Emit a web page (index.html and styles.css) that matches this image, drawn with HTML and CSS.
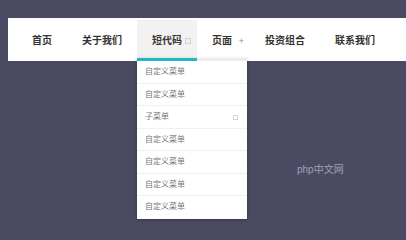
FILE: index.html
```html
<!DOCTYPE html>
<html>
<head>
    <meta charset="UTF-8">
    <title>导航菜单</title>
    <link rel="stylesheet" href="styles.css">
</head>
<body>
    <ul class="navBar">
        <li class="navItem"><a href="#">首页</a></li>
        <li class="navItem"><a href="#">关于我们</a></li>
        <li class="navItem navActive">
            <a href="#">短代码</a><span class="boxIcon"></span>
            <ul class="subMenu">
                <li><a href="#">自定义菜单</a></li>
                <li><a href="#">自定义菜单</a></li>
                <li><a href="#">子菜单</a><span class="boxIcon subBox"></span></li>
                <li><a href="#">自定义菜单</a></li>
                <li><a href="#">自定义菜单</a></li>
                <li><a href="#">自定义菜单</a></li>
                <li><a href="#">自定义菜单</a></li>
            </ul>
        </li>
        <li class="navItem navPlus"><a href="#">页面</a><span class="plusIcon">+</span></li>
        <li class="navItem"><a href="#">投资组合</a></li>
        <li class="navItem"><a href="#">联系我们</a></li>
    </ul>
    <p class="siteMark">php中文网</p>
</body>
</html>
```

FILE: styles.css
```css
html, body {
    margin: 0;
    padding: 0;
}

body {
    background: #4a4a62;
    padding: 18px 0 0 8px;
    height: 240px;
    box-sizing: border-box;
    overflow: hidden;
    font-family: "Liberation Sans", "Noto Sans CJK SC", sans-serif;
}

ul {
    list-style: none;
    margin: 0;
    padding: 0;
}

a {
    text-decoration: none;
}

.navBar {
    display: flex;
    background: #fff;
    height: 43px;
    padding: 2px 0 0 9px;
    box-sizing: border-box;
    width: 100%;
}

.navItem {
    position: relative;
    flex-shrink: 0;
    height: 41px;
    padding: 0 15px;
    box-sizing: border-box;
    line-height: 42px;
    font-size: 10px;
    font-weight: bold;
}

.navItem a {
    color: #333;
}

.navActive {
    background: #f2f2f2;
}

.navActive::after {
    content: "";
    position: absolute;
    left: 0;
    right: 0;
    bottom: 0;
    height: 3px;
    background: #22b6c8;
    z-index: 3;
}

.boxIcon {
    position: absolute;
    top: 18px;
    right: 6px;
    width: 4px;
    height: 4px;
    border: 1px solid #d0d0d0;
}

.navPlus {
    padding-right: 18px;
}

.plusIcon {
    position: absolute;
    right: 6px;
    top: 0;
    font-size: 9px;
    font-weight: normal;
    color: #888;
}

.subMenu {
    position: absolute;
    top: 38px;
    left: 0;
    width: 110px;
    background: #fff;
    border-top: 3px solid #ececec;
    box-shadow: 0 1px 3px rgba(0, 0, 0, 0.25);
    z-index: 2;
}

.subMenu li {
    position: relative;
    height: 22.5px;
    line-height: 22px;
    padding-left: 8px;
    border-bottom: 1px solid #f0f0f0;
    box-sizing: border-box;
    font-size: 8px;
    font-weight: normal;
}

.subMenu li:last-child {
    border-bottom: none;
}

.subMenu a {
    color: #777;
}

.subBox {
    top: 9px;
    right: 9px;
    width: 3px;
    height: 3px;
    border-color: #d6d6d6;
}

.siteMark {
    position: absolute;
    left: 297px;
    top: 161px;
    margin: 0;
    font-size: 10px;
    color: #a0a0b8;
}
```
